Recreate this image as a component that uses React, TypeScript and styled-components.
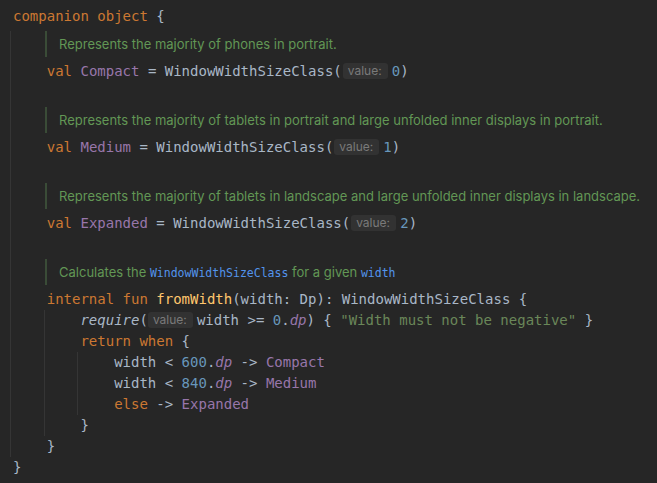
import React from "react";
import styled, { createGlobalStyle } from "styled-components";

const GlobalStyle = createGlobalStyle`
  html, body { margin: 0; padding: 0; background: #262626; }
`;

const Editor = styled.div`
  min-height: 100vh;
  box-sizing: border-box;
  background: #262626;
  padding: 6px 0 0 10px;
  font-family: "DejaVu Sans Mono", monospace;
  font-size: 14px;
  color: #a9b7c6;
`;

const Line = styled.div`
  height: 21px;
  line-height: 21px;
  padding-left: 3px;
  white-space: pre;
`;

const Block = styled.div`
  border-left: 1px solid #353535;
  padding-left: 32.72px;
`;

const DocComment = styled.div`
  margin: 4px 0 4px 1.3px;
  height: 26px;
  line-height: 26px;
  border-left: 2px solid #3a4c37;
  padding-left: 12px;
  white-space: pre;
  font-family: Inter, "Noto Sans", sans-serif;
  font-size: 13px;
  color: #629755;
`;

const DocCode = styled.span`
  font-family: "DejaVu Sans Mono", monospace;
  font-size: 11.5px;
  color: #5394ec;
`;

const Kw = styled.span`
  color: #cc7832;
`;
const Prop = styled.span<{ $italic?: boolean }>`
  color: #9876aa;
  font-style: ${(p) => (p.$italic ? "italic" : "normal")};
`;
const Num = styled.span`
  color: #6897bb;
`;
const Str = styled.span`
  color: #6a8759;
`;
const FnDecl = styled.span`
  color: #ffc66d;
`;
const Call = styled.span`
  font-style: italic;
`;

const Hint = styled.span<{ $gap?: number }>`
  display: inline-block;
  vertical-align: middle;
  box-sizing: border-box;
  width: 45px;
  height: 16px;
  line-height: 16px;
  padding-left: 5px;
  margin-left: ${(p) => p.$gap ?? 1}px;
  margin-right: 4px;
  margin-top: -2px;
  border-radius: 3px;
  background: #323232;
  font-family: Inter, "Noto Sans", sans-serif;
  font-size: 12px;
  color: #7a7a7a;
`;

const Blank = styled.div`
  height: 21px;
`;

const sizes = [
  { doc: "Represents the majority of phones in portrait.", name: "Compact", v: "0" },
  {
    doc: "Represents the majority of tablets in portrait and large unfolded inner displays in portrait.",
    name: "Medium",
    v: "1",
  },
  {
    doc: "Represents the majority of tablets in landscape and large unfolded inner displays in landscape.",
    name: "Expanded",
    v: "2",
  },
];

export default function App() {
  return (
    <>
      <GlobalStyle />
      <Editor>
        <Line>
          <Kw>companion object</Kw>{" {"}
        </Line>
        <Block>
          {sizes.map((s, i) => (
            <React.Fragment key={s.name}>
              {i > 0 && <Blank />}
              <DocComment>{s.doc}</DocComment>
              <Line>
                <Kw>val</Kw>{" "}<Prop>{s.name}</Prop>{" = WindowWidthSizeClass("}
                <Hint>value:</Hint>
                <Num>{s.v}</Num>)
              </Line>
            </React.Fragment>
          ))}
          <Blank />
          <DocComment>
            {"Calculates the "}<DocCode>WindowWidthSizeClass</DocCode>{" for a given "}<DocCode>width</DocCode>
          </DocComment>
          <Line>
            <Kw>internal fun</Kw>{" "}<FnDecl>fromWidth</FnDecl>{"(width: Dp): WindowWidthSizeClass {"}
          </Line>
          <Block>
            <Line>
              <Call>require</Call>(
              <Hint $gap={0}>value:</Hint>
              {"width >= "}<Num>0</Num>.<Prop $italic>dp</Prop>{") { "}<Str>"Width must not be negative"</Str>{" }"}
            </Line>
            <Line>
              <Kw>return when</Kw>{" {"}
            </Line>
            <Block>
              <Line>
                {"width < "}<Num>600</Num>.<Prop $italic>dp</Prop>{" -> "}<Prop>Compact</Prop>
              </Line>
              <Line>
                {"width < "}<Num>840</Num>.<Prop $italic>dp</Prop>{" -> "}<Prop>Medium</Prop>
              </Line>
              <Line>
                <Kw>else</Kw>{" -> "}<Prop>Expanded</Prop>
              </Line>
            </Block>
            <Line>{"}"}</Line>
          </Block>
          <Line>{"}"}</Line>
        </Block>
        <Line>{"}"}</Line>
      </Editor>
    </>
  );
}
